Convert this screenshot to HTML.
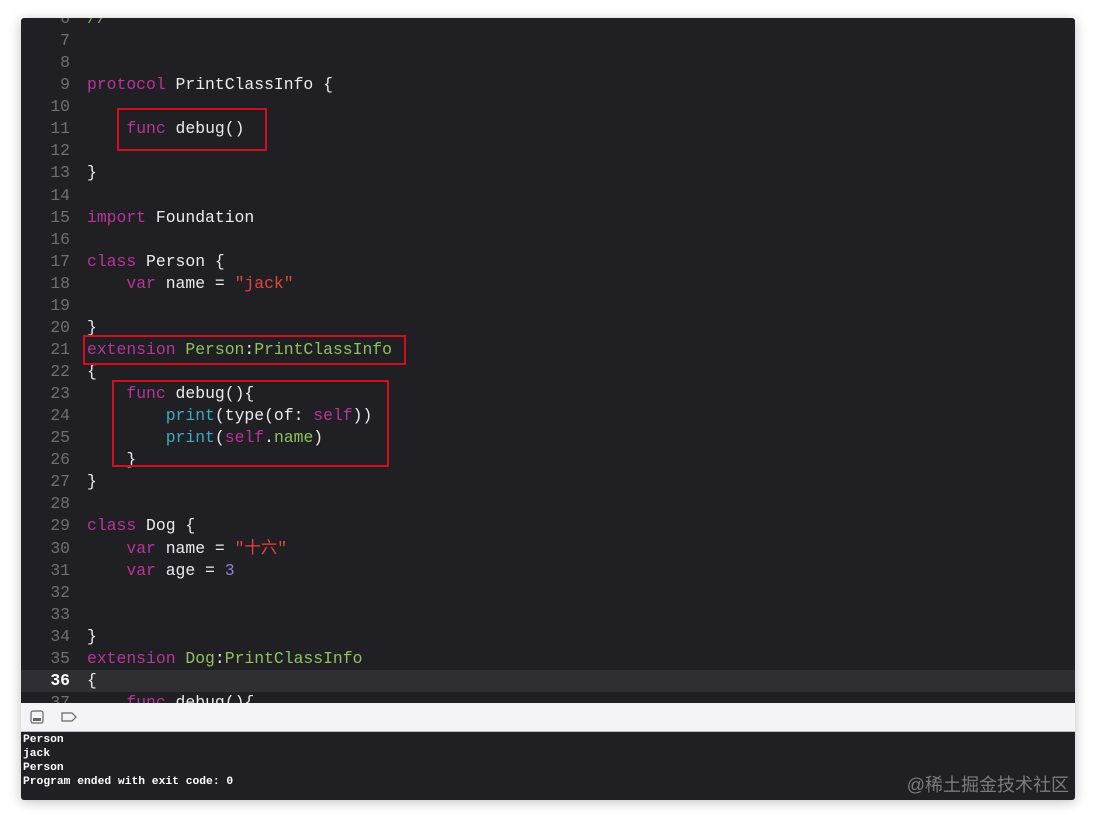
<!DOCTYPE html>
<html><head><meta charset="utf-8"><style>
html,body{margin:0;padding:0;background:#fff;width:1093px;height:818px;overflow:hidden}
.win{position:absolute;left:21px;top:18px;width:1054px;height:782px;background:#1f1f24;overflow:hidden;border-radius:3px;box-shadow:0 2px 12px rgba(0,0,0,.25)}
.code{position:absolute;left:0;top:-10px;width:100%;font-family:"Liberation Mono","Noto Sans CJK SC",monospace;font-size:16.4px;color:#ececec}
.l{height:22.07px;line-height:22.07px;white-space:pre;position:relative}
.n{display:inline-block;width:49px;text-align:right;color:#6f6f75;margin-right:17px}
.hl{background:#2e2e33}
.hl .n{color:#fff;font-weight:bold}
.k{color:#b8359a}.g{color:#8ec35f}.s{color:#e8443a}.d{color:#8b80dc}.t{color:#3eaac0}.c{color:#6bb04d}
.box{position:absolute;border:2px solid #d0101e;box-sizing:border-box}
.bar{position:absolute;left:0;top:685px;width:100%;height:28px;background:#f4f4f6;border-bottom:1px solid #bbb}
.con{position:absolute;left:2px;top:715px;font-family:"Liberation Mono",monospace;font-weight:bold;font-size:11.3px;line-height:14px;color:#fff;white-space:pre}
.wm{position:absolute;right:6px;top:753px;font-family:"Liberation Sans","Noto Sans CJK SC",sans-serif;font-size:18px;color:#7a7a80}
</style></head><body>
<div class="win">
<div class="code">
<div class="l"><span class="n">6</span><span class="c">//</span></div>
<div class="l"><span class="n">7</span></div>
<div class="l"><span class="n">8</span></div>
<div class="l"><span class="n">9</span><span class="k">protocol</span> PrintClassInfo {</div>
<div class="l"><span class="n">10</span></div>
<div class="l"><span class="n">11</span>    <span class="k">func</span> debug()</div>
<div class="l"><span class="n">12</span></div>
<div class="l"><span class="n">13</span>}</div>
<div class="l"><span class="n">14</span></div>
<div class="l"><span class="n">15</span><span class="k">import</span> Foundation</div>
<div class="l"><span class="n">16</span></div>
<div class="l"><span class="n">17</span><span class="k">class</span> Person {</div>
<div class="l"><span class="n">18</span>    <span class="k">var</span> name = <span class="s">"jack"</span></div>
<div class="l"><span class="n">19</span></div>
<div class="l"><span class="n">20</span>}</div>
<div class="l"><span class="n">21</span><span class="k">extension</span> <span class="g">Person</span>:<span class="g">PrintClassInfo</span></div>
<div class="l"><span class="n">22</span>{</div>
<div class="l"><span class="n">23</span>    <span class="k">func</span> debug(){</div>
<div class="l"><span class="n">24</span>        <span class="t">print</span>(type(of: <span class="k">self</span>))</div>
<div class="l"><span class="n">25</span>        <span class="t">print</span>(<span class="k">self</span>.<span class="g">name</span>)</div>
<div class="l"><span class="n">26</span>    }</div>
<div class="l"><span class="n">27</span>}</div>
<div class="l"><span class="n">28</span></div>
<div class="l"><span class="n">29</span><span class="k">class</span> Dog {</div>
<div class="l"><span class="n">30</span>    <span class="k">var</span> name = <span class="s">"十六"</span></div>
<div class="l"><span class="n">31</span>    <span class="k">var</span> age = <span class="d">3</span></div>
<div class="l"><span class="n">32</span></div>
<div class="l"><span class="n">33</span></div>
<div class="l"><span class="n">34</span>}</div>
<div class="l"><span class="n">35</span><span class="k">extension</span> <span class="g">Dog</span>:<span class="g">PrintClassInfo</span></div>
<div class="l hl"><span class="n">36</span>{</div>
<div class="l"><span class="n">37</span>    <span class="k">func</span> debug(){</div>
</div>
<div class="box" style="left:96px;top:90px;width:150px;height:43px"></div>
<div class="box" style="left:62px;top:317px;width:323px;height:30px"></div>
<div class="box" style="left:91px;top:362px;width:277px;height:87px"></div>
<div class="bar">
<svg width="60" height="28" style="position:absolute;left:8px;top:0">
<rect x="2" y="8" width="12" height="12" rx="2" fill="none" stroke="#666" stroke-width="1.2"/><rect x="4" y="15" width="8" height="3" fill="#666"/>
<path d="M33 10h10l4 4-4 4h-10z" fill="none" stroke="#666" stroke-width="1.2"/>
</svg>
</div>
<div class="con">Person
jack
Person
Program ended with exit code: 0</div>
<div class="wm">@稀土掘金技术社区</div>
</div>
</body></html>
